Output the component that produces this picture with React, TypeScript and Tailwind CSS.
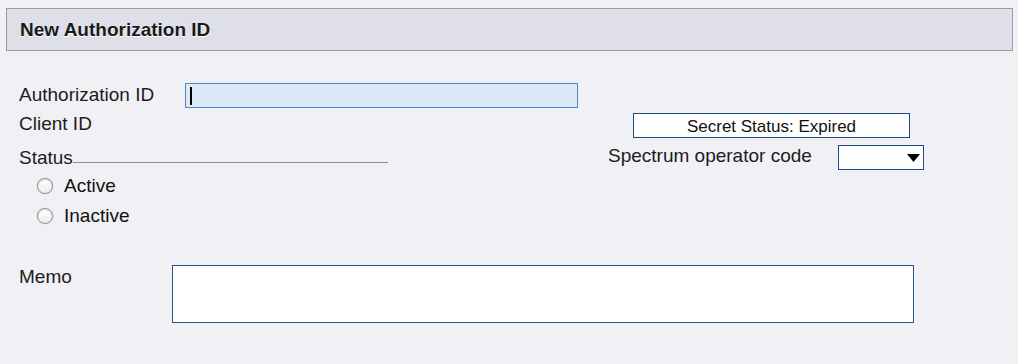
const FONT = "font-['Liberation_Sans',Arial,sans-serif]";

function Radio({ label }: { label: string }) {
  return (
    <label className="flex h-[22px] items-center">
      <span className="ml-[18px] block h-[16px] w-[16px] shrink-0 rounded-full border border-[#949494] bg-gradient-to-b from-[#ffffff] to-[#ececec] shadow-[0_0_1px_rgba(0,0,0,0.35),inset_0_1px_1px_rgba(0,0,0,0.15)]" />
      <span className="ml-[11px] text-[19px] leading-[22px] text-[#111]">{label}</span>
    </label>
  );
}

export default function App() {
  return (
    <div className={`${FONT} min-h-screen w-full bg-[#f0f0f5] px-[6px] pt-[8px] text-[#1c1c1c]`}>
      <div className="flex h-[43px] w-[1007px] items-center border border-[#9b9b9b] bg-[#dfdfe9] pl-[13px]">
        <h1 className="text-[19px] font-bold leading-[22px] text-[#1a1a1a] [text-shadow:0_1px_0_#ffffff]">
          New Authorization ID
        </h1>
      </div>

      <div className="mt-[32px] flex pl-[13px]">
        <div className="flex w-[589px] flex-col">
          <div className="flex items-start">
            <span className="mt-[1px] w-[166px] text-[19px] leading-[22px]">Authorization ID</span>
            <div className="flex h-[25px] w-[393px] items-center border border-[#4a86cc] bg-[#dde9f6] pl-[4px]">
              <span className="h-[18px] w-[2px] bg-black" />
            </div>
          </div>
          <span className="mt-[5px] text-[19px] leading-[22px]">Client ID</span>
          <div className="mt-[12px] flex w-[369px] items-end">
            <span className="text-[19px] leading-[22px]">Status</span>
            <div className="mb-[6px] flex-1 border-b border-[#8c8c8c]" />
          </div>
          <div className="mt-[6px]">
            <Radio label="Active" />
          </div>
          <div className="mt-[8px]">
            <Radio label="Inactive" />
          </div>
        </div>

        <div className="flex flex-col">
          <div className="ml-[25px] mt-[30px] flex h-[25px] w-[277px] items-end justify-center border border-[#1f4c88] bg-white text-[17px] leading-[20px] text-[#111]">
            Secret Status: Expired
          </div>
          <div className="mt-[7px] flex items-start">
            <span className="w-[230px] text-[19px] leading-[22px]">Spectrum operator code</span>
            <div className="flex h-[25px] w-[86px] items-center justify-end border border-[#1f4c88] bg-white pr-[3px]">
              <svg width="13" height="8" viewBox="0 0 13 8">
                <polygon points="0,0 13,0 6.5,8" fill="#000" />
              </svg>
            </div>
          </div>
        </div>
      </div>

      <div className="mt-[38px] flex items-start pl-[13px]">
        <span className="mt-[1px] w-[153px] text-[19px] leading-[22px]">Memo</span>
        <div className="h-[58px] w-[742px] border border-[#27548c] bg-white" />
      </div>
    </div>
  );
}
